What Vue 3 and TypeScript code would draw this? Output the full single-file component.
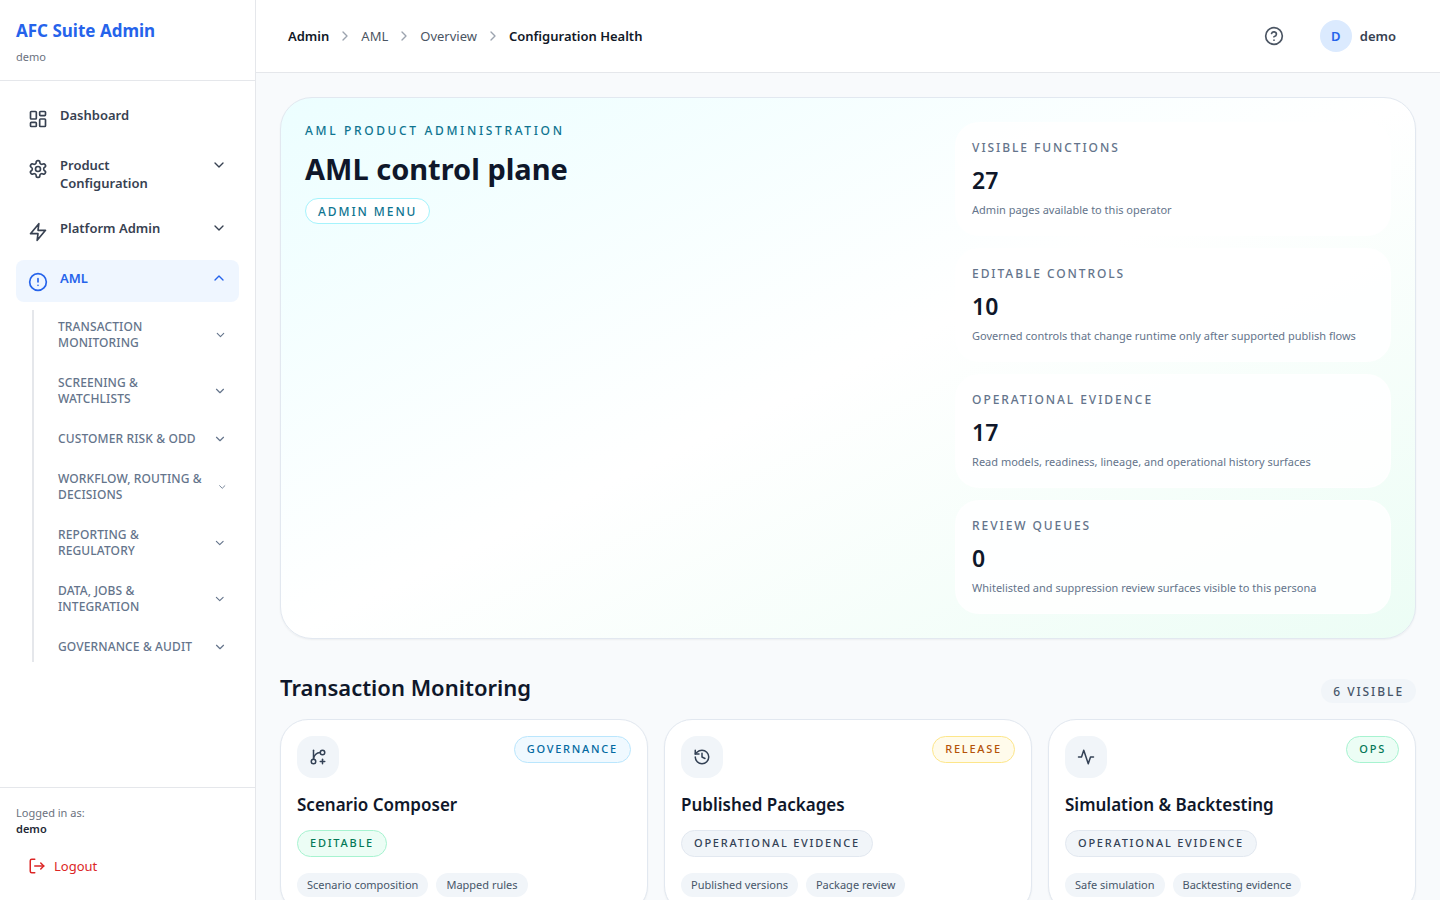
<script setup lang="ts">
import { ref } from 'vue'

interface NavItem {
  label: string
  icon: string
  expandable: boolean
}

interface Stat {
  label: string
  value: number
  description: string
}

interface FunctionCard {
  title: string
  icon: string
  category: string
  categoryTone: string
  mode: string
  modeTone: string
  tags: string[]
}

const icons: Record<string, string[]> = {
  dashboard: [
    'M4 3h5a1 1 0 0 1 1 1v7a1 1 0 0 1-1 1H4a1 1 0 0 1-1-1V4a1 1 0 0 1 1-1z',
    'M15 3h5a1 1 0 0 1 1 1v3a1 1 0 0 1-1 1h-5a1 1 0 0 1-1-1V4a1 1 0 0 1 1-1z',
    'M15 12h5a1 1 0 0 1 1 1v7a1 1 0 0 1-1 1h-5a1 1 0 0 1-1-1v-7a1 1 0 0 1 1-1z',
    'M4 16h5a1 1 0 0 1 1 1v3a1 1 0 0 1-1 1H4a1 1 0 0 1-1-1v-3a1 1 0 0 1 1-1z',
  ],
  settings: [
    'M12.22 2h-.44a2 2 0 0 0-2 2v.18a2 2 0 0 1-1 1.73l-.43.25a2 2 0 0 1-2 0l-.15-.08a2 2 0 0 0-2.73.73l-.22.38a2 2 0 0 0 .73 2.73l.15.1a2 2 0 0 1 1 1.72v.51a2 2 0 0 1-1 1.74l-.15.09a2 2 0 0 0-.73 2.73l.22.38a2 2 0 0 0 2.73.73l.15-.08a2 2 0 0 1 2 0l.43.25a2 2 0 0 1 1 1.73V20a2 2 0 0 0 2 2h.44a2 2 0 0 0 2-2v-.18a2 2 0 0 1 1-1.73l.43-.25a2 2 0 0 1 2 0l.15.08a2 2 0 0 0 2.73-.73l.22-.39a2 2 0 0 0-.73-2.73l-.15-.08a2 2 0 0 1-1-1.74v-.5a2 2 0 0 1 1-1.74l.15-.09a2 2 0 0 0 .73-2.73l-.22-.38a2 2 0 0 0-2.73-.73l-.15.08a2 2 0 0 1-2 0l-.43-.25a2 2 0 0 1-1-1.73V4a2 2 0 0 0-2-2z',
    'M12 9a3 3 0 1 0 0 6 3 3 0 0 0 0-6z',
  ],
  zap: ['M13 2 3 14h9l-1 8 10-12h-9l1-8z'],
  alert: ['M12 2a10 10 0 1 0 0 20 10 10 0 0 0 0-20z', 'M12 8v4', 'M12 16h.01'],
  help: [
    'M12 2a10 10 0 1 0 0 20 10 10 0 0 0 0-20z',
    'M9.09 9a3 3 0 0 1 5.83 1c0 2-3 3-3 3',
    'M12 17h.01',
  ],
  logout: ['M9 21H5a2 2 0 0 1-2-2V5a2 2 0 0 1 2-2h4', 'M17 16l4-4-4-4', 'M21 12H9'],
  down: ['M6 9l6 6 6-6'],
  up: ['M18 15l-6-6-6 6'],
  right: ['M9 18l6-6-6-6'],
  branch: [
    'M6 3v12',
    'M18 9a3 3 0 1 0 0-6 3 3 0 0 0 0 6z',
    'M6 21a3 3 0 1 0 0-6 3 3 0 0 0 0 6z',
    'M15 6a9 9 0 0 0-9 9',
    'M18 15v6',
    'M21 18h-6',
  ],
  history: ['M3 12a9 9 0 1 0 9-9 9.75 9.75 0 0 0-6.74 2.74L3 8', 'M3 3v5h5', 'M12 7v5l4 2'],
  activity: ['M22 12h-4l-3 9L9 3l-3 9H2'],
}

const navItems: NavItem[] = [
  { label: 'Dashboard', icon: 'dashboard', expandable: false },
  { label: 'Product Configuration', icon: 'settings', expandable: true },
  { label: 'Platform Admin', icon: 'zap', expandable: true },
  { label: 'AML', icon: 'alert', expandable: true },
]

const groups: string[] = [
  'Transaction Monitoring',
  'Screening & Watchlists',
  'Customer Risk & ODD',
  'Workflow, Routing & Decisions',
  'Reporting & Regulatory',
  'Data, Jobs & Integration',
  'Governance & Audit',
]

const crumbs: string[] = ['Admin', 'AML', 'Overview', 'Configuration Health']

const stats: Stat[] = [
  { label: 'Visible functions', value: 27, description: 'Admin pages available to this operator' },
  {
    label: 'Editable controls',
    value: 10,
    description: 'Governed controls that change runtime only after supported publish flows',
  },
  {
    label: 'Operational evidence',
    value: 17,
    description: 'Read models, readiness, lineage, and operational history surfaces',
  },
  {
    label: 'Review queues',
    value: 0,
    description: 'Whitelisted and suppression review surfaces visible to this persona',
  },
]

const cards: FunctionCard[] = [
  {
    title: 'Scenario Composer',
    icon: 'branch',
    category: 'Governance',
    categoryTone: 'sky',
    mode: 'Editable',
    modeTone: 'green',
    tags: ['Scenario composition', 'Mapped rules'],
  },
  {
    title: 'Published Packages',
    icon: 'history',
    category: 'Release',
    categoryTone: 'amber',
    mode: 'Operational evidence',
    modeTone: 'slate',
    tags: ['Published versions', 'Package review'],
  },
  {
    title: 'Simulation & Backtesting',
    icon: 'activity',
    category: 'Ops',
    categoryTone: 'green',
    mode: 'Operational evidence',
    modeTone: 'slate',
    tags: ['Safe simulation', 'Backtesting evidence'],
  },
]

const openItem = ref<string>('AML')

function toggle(label: string): void {
  openItem.value = openItem.value === label ? '' : label
}
</script>

<template>
  <div class="shell">
    <aside class="sidebar">
      <div class="brand">
        <h1 class="brand-name">AFC Suite Admin</h1>
        <p class="brand-tenant">demo</p>
      </div>

      <nav class="nav" aria-label="Main">
        <template v-for="item in navItems" :key="item.label">
          <a v-if="!item.expandable" class="nav-item" href="#">
            <svg class="icon-20 nav-icon" viewBox="0 0 24 24" aria-hidden="true">
              <path v-for="d in icons[item.icon]" :key="d" :d="d" />
            </svg>
            <span class="nav-label">{{ item.label }}</span>
          </a>
          <button
            v-else
            type="button"
            class="nav-item"
            :class="{ active: openItem === item.label }"
            :aria-expanded="openItem === item.label"
            @click="toggle(item.label)"
          >
            <svg class="icon-20 nav-icon" viewBox="0 0 24 24" aria-hidden="true">
              <path v-for="d in icons[item.icon]" :key="d" :d="d" />
            </svg>
            <span class="nav-label">{{ item.label }}</span>
            <svg class="icon-16" viewBox="0 0 24 24" aria-hidden="true">
              <path
                v-for="d in icons[openItem === item.label ? 'up' : 'down']"
                :key="d"
                :d="d"
              />
            </svg>
          </button>
        </template>

        <div v-if="openItem === 'AML'" class="subnav">
          <button v-for="group in groups" :key="group" type="button" class="group">
            <span class="group-label">{{ group }}</span>
            <svg class="group-chevron" viewBox="0 0 24 24" aria-hidden="true">
              <path v-for="d in icons.down" :key="d" :d="d" />
            </svg>
          </button>
        </div>
      </nav>

      <div class="account">
        <p class="account-hint">Logged in as:</p>
        <p class="account-name">demo</p>
        <button type="button" class="logout">
          <svg class="icon-18" viewBox="0 0 24 24" aria-hidden="true">
            <path v-for="d in icons.logout" :key="d" :d="d" />
          </svg>
          <span>Logout</span>
        </button>
      </div>
    </aside>

    <div class="content">
      <header class="topbar">
        <nav class="crumbs" aria-label="Breadcrumb">
          <template v-for="(crumb, i) in crumbs" :key="crumb">
            <svg v-if="i > 0" class="icon-16 crumb-sep" viewBox="0 0 24 24" aria-hidden="true">
              <path v-for="d in icons.right" :key="d" :d="d" />
            </svg>
            <a
              href="#"
              class="crumb"
              :class="{ strong: i === 0 || i === crumbs.length - 1 }"
            >{{ crumb }}</a>
          </template>
        </nav>
        <div class="tools">
          <button type="button" class="help" aria-label="Help">
            <svg class="icon-20" viewBox="0 0 24 24" aria-hidden="true">
              <path v-for="d in icons.help" :key="d" :d="d" />
            </svg>
          </button>
          <button type="button" class="user">
            <span class="avatar">D</span>
            <span>demo</span>
          </button>
        </div>
      </header>

      <main class="page">
        <section class="hero">
          <div>
            <p class="eyebrow">AML product administration</p>
            <h2 class="hero-title">AML control plane</h2>
            <span class="pill-menu">Admin menu</span>
          </div>
          <div class="stats">
            <article v-for="stat in stats" :key="stat.label" class="stat">
              <p class="stat-label">{{ stat.label }}</p>
              <p class="stat-value">{{ stat.value }}</p>
              <p class="stat-text">{{ stat.description }}</p>
            </article>
          </div>
        </section>

        <section class="section">
          <div class="section-head">
            <h3 class="section-title">Transaction Monitoring</h3>
            <span class="count">6 visible</span>
          </div>
          <div class="cards">
            <a v-for="card in cards" :key="card.title" href="#" class="card">
              <div class="card-top">
                <span class="card-icon">
                  <svg class="icon-18" viewBox="0 0 24 24" aria-hidden="true">
                    <path v-for="d in icons[card.icon]" :key="d" :d="d" />
                  </svg>
                </span>
                <span class="pill" :class="card.categoryTone">{{ card.category }}</span>
              </div>
              <h4 class="card-title">{{ card.title }}</h4>
              <span class="pill" :class="card.modeTone">{{ card.mode }}</span>
              <div class="tags">
                <span v-for="tag in card.tags" :key="tag" class="tag">{{ tag }}</span>
              </div>
            </a>
          </div>
        </section>
      </main>
    </div>
  </div>
</template>

<style>
body {
  margin: 0;
  background: #f8fafc;
}
</style>

<style scoped>
.shell {
  display: flex;
  height: 100vh;
  overflow: hidden;
  font-family: 'Segoe UI', 'Noto Sans', 'Open Sans', sans-serif;
  font-size: 13px;
  line-height: 20px;
  color: #0f172a;
}

.shell * {
  box-sizing: border-box;
}

h1,
h2,
h3,
h4,
p {
  margin: 0;
}

button {
  border: 0;
  background: none;
  font: inherit;
  color: inherit;
  text-align: left;
  cursor: pointer;
}

a {
  color: inherit;
  text-decoration: none;
}

svg {
  display: block;
  fill: none;
  stroke: currentColor;
  stroke-width: 2;
  stroke-linecap: round;
  stroke-linejoin: round;
}

.icon-16 {
  width: 16px;
  height: 16px;
  flex-shrink: 0;
}

.icon-18 {
  width: 18px;
  height: 18px;
  flex-shrink: 0;
}

.icon-20 {
  width: 20px;
  height: 20px;
  flex-shrink: 0;
}

/* Sidebar */
.sidebar {
  display: flex;
  flex-direction: column;
  flex-shrink: 0;
  width: 256px;
  background: #ffffff;
  border-right: 1px solid #e5e7eb;
}

.brand {
  padding: 17px 16px 15px;
  border-bottom: 1px solid #e5e7eb;
}

.brand-name {
  font-size: 17px;
  line-height: 28px;
  font-weight: 700;
  color: #2563eb;
}

.brand-tenant {
  margin-top: 4px;
  font-size: 11px;
  line-height: 16px;
  color: #6b7280;
}

.nav {
  display: flex;
  flex: 1;
  flex-direction: column;
  gap: 8px;
  min-height: 0;
  padding: 16px;
}

.nav-item {
  display: flex;
  align-items: flex-start;
  gap: 12px;
  width: 100%;
  padding: 10px 12px;
  border-radius: 8px;
  font-size: 13px;
  font-weight: 600;
  line-height: 1.35;
  color: #374151;
}

.nav-item.active {
  background: #eff6ff;
  color: #2563eb;
}

.nav-icon {
  margin-top: 2px;
}

.nav-label {
  flex: 1;
}

.subnav {
  display: flex;
  flex-direction: column;
  gap: 8px;
  margin-left: 16px;
  padding-left: 12px;
  border-left: 2px solid #e5e7eb;
}

.group {
  display: flex;
  align-items: center;
  justify-content: space-between;
  width: 100%;
  padding: 8px 12px 7px;
  font-size: 12px;
  line-height: 16px;
  font-weight: 500;
  letter-spacing: 0.01em;
  text-transform: uppercase;
  color: #64748b;
}

.group-label {
  padding-top: 1px;
}

.group-chevron {
  width: 14px;
  height: 14px;
}

.account {
  padding: 17px 16px 16px;
  border-top: 1px solid #e5e7eb;
}

.account-hint,
.account-name {
  font-size: 11px;
  line-height: 16px;
  color: #6b7280;
}

.account-name {
  font-weight: 600;
  color: #1f2937;
}

.logout {
  display: flex;
  align-items: center;
  gap: 8px;
  width: 100%;
  margin-top: 11px;
  padding: 8px 12px;
  color: #dc2626;
}

/* Top bar */
.content {
  display: flex;
  flex: 1;
  flex-direction: column;
  min-width: 0;
}

.topbar {
  display: flex;
  align-items: center;
  justify-content: space-between;
  flex-shrink: 0;
  padding: 12px 32px;
  background: #ffffff;
  border-bottom: 1px solid #e5e7eb;
}

.crumbs {
  display: flex;
  align-items: center;
  gap: 8px;
}

.crumb {
  color: #4b5563;
}

.crumb.strong {
  font-weight: 600;
  color: #111827;
}

.crumb-sep {
  color: #9ca3af;
}

.tools {
  display: flex;
  align-items: center;
  gap: 16px;
}

.help {
  padding: 8px;
  color: #4b5563;
}

.user {
  display: flex;
  align-items: center;
  gap: 8px;
  padding: 8px 12px;
  font-weight: 600;
  color: #374151;
}

.avatar {
  display: flex;
  align-items: center;
  justify-content: center;
  width: 32px;
  height: 32px;
  border-radius: 50%;
  background: #dbeafe;
  color: #2563eb;
}

/* Page */
.page {
  display: flex;
  flex: 1;
  flex-direction: column;
  gap: 32px;
  min-height: 0;
  padding: 24px;
  overflow-y: auto;
  scrollbar-width: none;
}

.hero {
  display: grid;
  grid-template-columns: minmax(0, 1.45fr) minmax(0, 1fr);
  gap: 18px;
  flex-shrink: 0;
  padding: 24px;
  border: 1px solid #e2e8f0;
  border-radius: 32px;
  background: linear-gradient(to bottom right, #ecfeff, #ffffff, #ecfdf5);
  box-shadow: 0 1px 2px rgba(0, 0, 0, 0.05);
}

.eyebrow {
  padding-top: 1px;
  font-size: 12px;
  line-height: 16px;
  font-weight: 500;
  letter-spacing: 0.22em;
  text-transform: uppercase;
  color: #0e7490;
}

.hero-title {
  margin-top: 12px;
  font-size: 29px;
  line-height: 36px;
  font-weight: 700;
}

.pill-menu {
  display: block;
  width: fit-content;
  margin-top: 11px;
  padding: 5px 12px 3px;
  border: 1px solid #a5f3fc;
  border-radius: 13px;
  background: #ffffff;
  font-size: 12px;
  line-height: 16px;
  font-weight: 500;
  letter-spacing: 0.16em;
  text-transform: uppercase;
  color: #0e7490;
}

.stats {
  display: grid;
  gap: 12px;
}

.stat {
  padding: 17px 16px;
  border: 1px solid rgba(255, 255, 255, 0.8);
  border-radius: 24px;
  background: rgba(255, 255, 255, 0.85);
}

.stat-label {
  font-size: 12px;
  line-height: 16px;
  font-weight: 500;
  letter-spacing: 0.16em;
  text-transform: uppercase;
  color: #64748b;
}

.stat-value {
  margin-top: 8px;
  font-size: 23px;
  line-height: 32px;
  font-weight: 600;
}

.stat-text {
  margin-top: 6px;
  font-size: 11px;
  line-height: 16px;
  color: #64748b;
}

.section {
  display: flex;
  flex-direction: column;
  gap: 16px;
  flex-shrink: 0;
}

.section-head {
  display: flex;
  align-items: flex-end;
  justify-content: space-between;
}

.section-title {
  font-size: 22px;
  line-height: 32px;
  font-weight: 600;
}

.count {
  padding: 5px 12px 3px;
  border-radius: 12px;
  background: #f1f5f9;
  font-size: 12px;
  line-height: 16px;
  font-weight: 500;
  letter-spacing: 0.16em;
  text-transform: uppercase;
  color: #475569;
}

.cards {
  display: grid;
  grid-template-columns: repeat(3, minmax(0, 1fr));
  gap: 16px;
}

.card {
  padding: 16px;
  border: 1px solid #e2e8f0;
  border-radius: 28px;
  background: #ffffff;
  box-shadow: 0 1px 2px rgba(0, 0, 0, 0.05);
}

.card-top {
  display: flex;
  align-items: flex-start;
  justify-content: space-between;
}

.card-icon {
  padding: 12px;
  border-radius: 16px;
  background: #f1f5f9;
  color: #334155;
}

.card-title {
  margin: 13px 0 11px;
  font-size: 17px;
  line-height: 28px;
  font-weight: 600;
}

.pill {
  display: block;
  width: fit-content;
  padding: 4px 12px;
  border: 1px solid;
  border-radius: 14px;
  font-size: 11px;
  line-height: 1.5;
  font-weight: 500;
  letter-spacing: 0.16em;
  text-transform: uppercase;
}

.pill.sky {
  border-color: #bae6fd;
  background: #f0f9ff;
  color: #0369a1;
}

.pill.green {
  border-color: #a7f3d0;
  background: #ecfdf5;
  color: #047857;
}

.pill.amber {
  border-color: #fde68a;
  background: #fffbeb;
  color: #b45309;
}

.pill.slate {
  border-color: #e2e8f0;
  background: #f1f5f9;
  color: #334155;
}

.tags {
  display: flex;
  flex-wrap: wrap;
  gap: 8px;
  margin-top: 16px;
}

.tag {
  padding: 4px 10px;
  border-radius: 12px;
  background: #f1f5f9;
  font-size: 11px;
  line-height: 16px;
  color: #475569;
}
</style>
